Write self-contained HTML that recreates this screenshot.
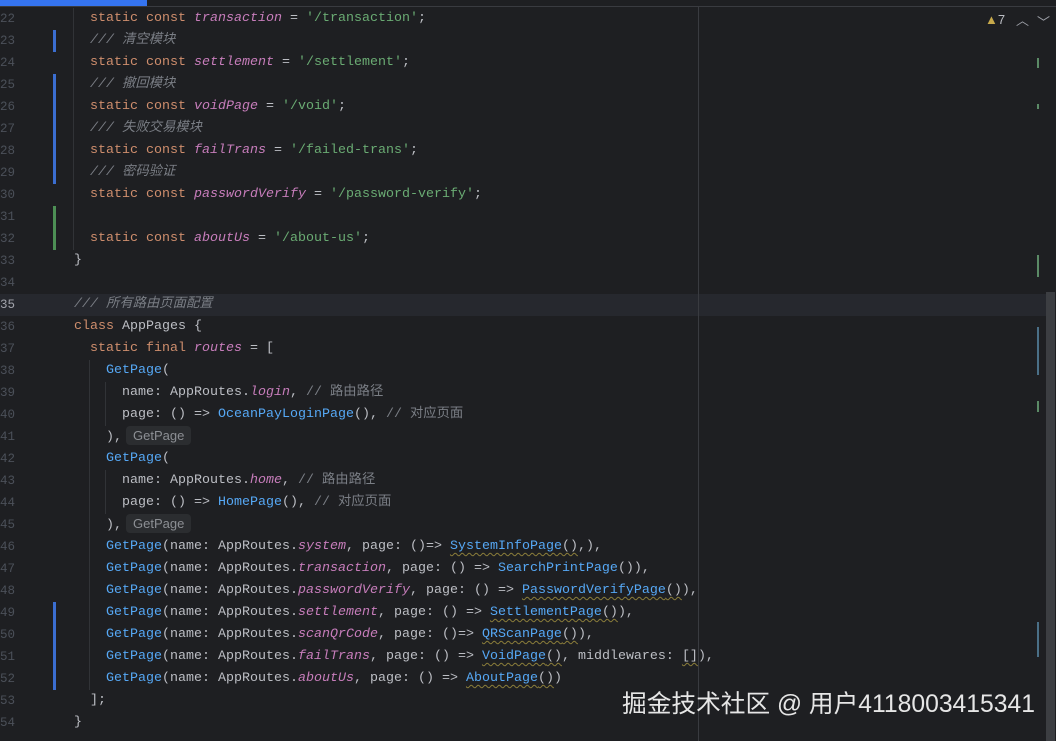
<!DOCTYPE html>
<html><head><meta charset="utf-8"><style>
*{margin:0;padding:0;box-sizing:border-box}
body{width:1056px;height:741px;background:#1e1f22;overflow:hidden;position:relative;font-family:"Liberation Mono","Noto Sans CJK SC",monospace;font-size:13.33px;color:#bcbec4}
.r{position:absolute;left:58px;height:22px;line-height:22px;white-space:pre}
.n{position:absolute;left:0;width:14px;text-align:right;height:22px;line-height:22px;color:#4b5059;font-size:12.5px}
.k{color:#cf8e6d}.i{color:#c77dbb;font-style:italic}.s{color:#6aab73}.c{color:#7a7e85;font-style:italic}.lc{color:#7a7e85}.f{color:#56a8f5}
.w{text-decoration:underline wavy #8b7d3a;text-decoration-thickness:1px;text-underline-offset:3px}
.h{display:inline-block;font-family:"Liberation Sans",sans-serif;font-size:13px;color:#8c8f94;background:#2b2d30;border-radius:4px;padding:0 7px;line-height:19px;margin-left:4px}
.g{position:absolute;left:53px;width:3px}
.ig{position:absolute;width:1px;background:#313337}
</style></head><body>
<div style="position:absolute;left:0;top:0;width:1056px;height:7px;background:#1e1f22;border-bottom:1px solid #393b40"></div>
<div style="position:absolute;left:0;top:0;width:147px;height:6px;background:#3574f0"></div>
<div style="position:absolute;left:0;top:294px;width:1046px;height:22px;background:#26282e"></div>
<div style="position:absolute;left:698px;top:7px;width:1px;height:734px;background:#393b40"></div>
<div class="ig" style="left:73px;top:8px;height:242px"></div>
<div class="ig" style="left:89px;top:360px;height:330px"></div>
<div class="ig" style="left:105px;top:382px;height:44px"></div>
<div class="ig" style="left:105px;top:470px;height:44px"></div>
<div class="g" style="top:30px;height:22px;background:#3b6ed1"></div>
<div class="g" style="top:74px;height:110px;background:#3b6ed1"></div>
<div class="g" style="top:206px;height:44px;background:#4d8f55"></div>
<div class="g" style="top:602px;height:88px;background:#3b6ed1"></div>
<div style="position:absolute;left:1046px;top:292px;width:9px;height:449px;background:#3c3e42"></div>
<div style="position:absolute;left:1037px;top:58px;width:2px;height:10px;background:#5b8a66"></div>
<div style="position:absolute;left:1037px;top:104px;width:2px;height:5px;background:#5b8a66"></div>
<div style="position:absolute;left:1037px;top:255px;width:2px;height:22px;background:#5b8a66"></div>
<div style="position:absolute;left:1037px;top:327px;width:2px;height:48px;background:#4a6f87"></div>
<div style="position:absolute;left:1037px;top:401px;width:2px;height:11px;background:#5b8a66"></div>
<div style="position:absolute;left:1037px;top:622px;width:2px;height:35px;background:#4a6f87"></div>
<div style="position:absolute;left:985px;top:12px;font-family:'Liberation Sans',sans-serif;font-size:13px;color:#bcbec4"><span style="color:#c7a94b">▲</span>7</div>
<div style="position:absolute;left:1016px;top:10px;font-family:'Liberation Sans',sans-serif;font-size:13px;color:#9da0a8">︿</div>
<div style="position:absolute;left:1037px;top:12px;font-family:'Liberation Sans',sans-serif;font-size:13px;color:#9da0a8">﹀</div>

<div class="n" style="top:8px">22</div><div class="r" style="top:8px">    <span class="k">static const</span> <span class="i">transaction</span> = <span class="s">'/transaction'</span>;</div>
<div class="n" style="top:30px">23</div><div class="r" style="top:30px">    <span class="c">/// 清空模块</span></div>
<div class="n" style="top:52px">24</div><div class="r" style="top:52px">    <span class="k">static const</span> <span class="i">settlement</span> = <span class="s">'/settlement'</span>;</div>
<div class="n" style="top:74px">25</div><div class="r" style="top:74px">    <span class="c">/// 撤回模块</span></div>
<div class="n" style="top:96px">26</div><div class="r" style="top:96px">    <span class="k">static const</span> <span class="i">voidPage</span> = <span class="s">'/void'</span>;</div>
<div class="n" style="top:118px">27</div><div class="r" style="top:118px">    <span class="c">/// 失败交易模块</span></div>
<div class="n" style="top:140px">28</div><div class="r" style="top:140px">    <span class="k">static const</span> <span class="i">failTrans</span> = <span class="s">'/failed-trans'</span>;</div>
<div class="n" style="top:162px">29</div><div class="r" style="top:162px">    <span class="c">/// 密码验证</span></div>
<div class="n" style="top:184px">30</div><div class="r" style="top:184px">    <span class="k">static const</span> <span class="i">passwordVerify</span> = <span class="s">'/password-verify'</span>;</div>
<div class="n" style="top:206px">31</div>
<div class="n" style="top:228px">32</div><div class="r" style="top:228px">    <span class="k">static const</span> <span class="i">aboutUs</span> = <span class="s">'/about-us'</span>;</div>
<div class="n" style="top:250px">33</div><div class="r" style="top:250px">  }</div>
<div class="n" style="top:272px">34</div>
<div class="n" style="top:294px;color:#a1a3ab">35</div><div class="r" style="top:294px">  <span class="c">/// 所有路由页面配置</span></div>
<div class="n" style="top:316px">36</div><div class="r" style="top:316px">  <span class="k">class</span> AppPages {</div>
<div class="n" style="top:338px">37</div><div class="r" style="top:338px">    <span class="k">static final</span> <span class="i">routes</span> = [</div>
<div class="n" style="top:360px">38</div><div class="r" style="top:360px">      <span class="f">GetPage</span>(</div>
<div class="n" style="top:382px">39</div><div class="r" style="top:382px">        name: AppRoutes.<span class="i">login</span>, <span class="lc">// 路由路径</span></div>
<div class="n" style="top:404px">40</div><div class="r" style="top:404px">        page: () => <span class="f">OceanPayLoginPage</span>(), <span class="lc">// 对应页面</span></div>
<div class="n" style="top:426px">41</div><div class="r" style="top:426px">      ),<span class="h">GetPage</span></div>
<div class="n" style="top:448px">42</div><div class="r" style="top:448px">      <span class="f">GetPage</span>(</div>
<div class="n" style="top:470px">43</div><div class="r" style="top:470px">        name: AppRoutes.<span class="i">home</span>, <span class="lc">// 路由路径</span></div>
<div class="n" style="top:492px">44</div><div class="r" style="top:492px">        page: () => <span class="f">HomePage</span>(), <span class="lc">// 对应页面</span></div>
<div class="n" style="top:514px">45</div><div class="r" style="top:514px">      ),<span class="h">GetPage</span></div>
<div class="n" style="top:536px">46</div><div class="r" style="top:536px">      <span class="f">GetPage</span>(name: AppRoutes.<span class="i">system</span>, page: ()=> <span class="f w">SystemInfoPage</span><span class="w">()</span>,),</div>
<div class="n" style="top:558px">47</div><div class="r" style="top:558px">      <span class="f">GetPage</span>(name: AppRoutes.<span class="i">transaction</span>, page: () => <span class="f">SearchPrintPage</span>()),</div>
<div class="n" style="top:580px">48</div><div class="r" style="top:580px">      <span class="f">GetPage</span>(name: AppRoutes.<span class="i">passwordVerify</span>, page: () => <span class="f w">PasswordVerifyPage</span><span class="w">()</span>),</div>
<div class="n" style="top:602px">49</div><div class="r" style="top:602px">      <span class="f">GetPage</span>(name: AppRoutes.<span class="i">settlement</span>, page: () => <span class="f w">SettlementPage</span><span class="w">()</span>),</div>
<div class="n" style="top:624px">50</div><div class="r" style="top:624px">      <span class="f">GetPage</span>(name: AppRoutes.<span class="i">scanQrCode</span>, page: ()=> <span class="f w">QRScanPage</span><span class="w">()</span>),</div>
<div class="n" style="top:646px">51</div><div class="r" style="top:646px">      <span class="f">GetPage</span>(name: AppRoutes.<span class="i">failTrans</span>, page: () => <span class="f w">VoidPage</span><span class="w">()</span>, middlewares: <span class="w">[]</span>),</div>
<div class="n" style="top:668px">52</div><div class="r" style="top:668px">      <span class="f">GetPage</span>(name: AppRoutes.<span class="i">aboutUs</span>, page: () => <span class="f w">AboutPage</span><span class="w">()</span>)</div>
<div class="n" style="top:690px">53</div><div class="r" style="top:690px">    ];</div>
<div class="n" style="top:712px">54</div><div class="r" style="top:712px">  }</div>

<div style="position:absolute;left:622px;top:688px;font-family:'Liberation Sans','Noto Sans CJK SC',sans-serif;font-size:24.7px;line-height:34px;color:#e6e6e6;white-space:nowrap">掘金技术社区 @ 用户4118003415341</div>
</body></html>
